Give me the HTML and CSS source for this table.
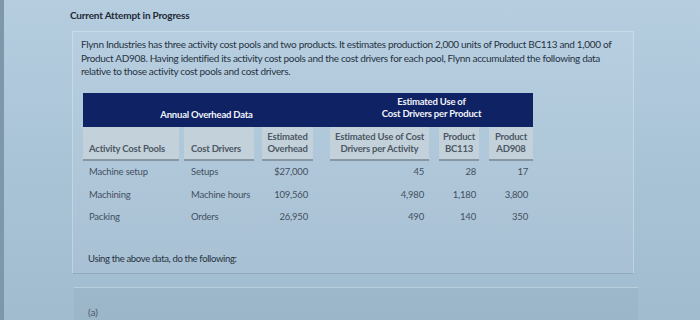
FILE: index.html
```html
<!DOCTYPE html>
<html>
<head>
<meta charset="utf-8">
<link rel="stylesheet" href="styles.css">
</head>
<body>
<div class="screen">
  <div class="title">Current Attempt in Progress</div>
  <div class="card">
    <p class="intro">Flynn Industries has three activity cost pools and two products. It estimates production 2,000 units of Product BC113 and 1,000 of Product AD908. Having identified its activity cost pools and the cost drivers for each pool, Flynn accumulated the following data relative to those activity cost pools and cost drivers.</p>
    <div class="table">
      <div class="band band-left">Annual Overhead Data</div>
      <div class="band band-right">Estimated Use of<br>Cost Drivers per Product</div>

      <div class="sh c1 left">Activity Cost Pools</div>
      <div class="sh c2 left">Cost Drivers</div>
      <div class="sh c3">Estimated<br>Overhead</div>
      <div class="sh c4">Estimated Use of Cost<br>Drivers per Activity</div>
      <div class="sh c5">Product<br>BC113</div>
      <div class="sh c6">Product<br>AD908</div>

      <div class="td c1 left">Machine setup</div>
      <div class="td c2 left">Setups</div>
      <div class="td c3 num">$27,000</div>
      <div class="td c4 num">45</div>
      <div class="td c5 num">28</div>
      <div class="td c6 num">17</div>

      <div class="td c1 left">Machining</div>
      <div class="td c2 left">Machine hours</div>
      <div class="td c3 num">109,560</div>
      <div class="td c4 num">4,980</div>
      <div class="td c5 num">1,180</div>
      <div class="td c6 num">3,800</div>

      <div class="td c1 left">Packing</div>
      <div class="td c2 left">Orders</div>
      <div class="td c3 num">26,950</div>
      <div class="td c4 num">490</div>
      <div class="td c5 num">140</div>
      <div class="td c6 num">350</div>
    </div>
    <p class="instr">Using the above data, do the following:</p>
  </div>
  <div class="part"><span class="part-label">(a)</span></div>
</div>
</body>
</html>
```

FILE: styles.css
```css
html, body {
  margin: 0;
  padding: 0;
  height: 100%;
}
body {
  font-family: Lato, "Open Sans", "Liberation Sans", sans-serif;
  background: linear-gradient(180deg, #b5cddf 0%, #abc5d8 45%, #a1bbcf 100%);
  overflow: hidden;
}
.screen {
  height: 320px;
  border-left: 4px solid #7f97ab;
  box-sizing: border-box;
  padding-top: 8px;
}
.title {
  margin-left: 66px;
  font-size: 10px;
  font-weight: 700;
  line-height: 14px;
  color: #1f2a37;
  letter-spacing: -0.2px;
}
.card {
  margin: 9px 0 0 68px;
  width: 562px;
  box-sizing: border-box;
  padding: 6px 8px 8px 8px;
  background: rgba(255, 255, 255, 0.06);
  border: 1px solid rgba(235, 243, 250, 0.35);
  border-bottom: 1px solid #93a9bb;
}
.intro {
  margin: 0;
  font-size: 10px;
  line-height: 13.5px;
  color: #263342;
  letter-spacing: -0.32px;
  width: 545px;
}
.table {
  margin: 14px 0 0 2px;
  display: grid;
  grid-template-columns: 101px 78px 68px 109px 50px 44px;
  grid-template-rows: 34px 34px;
  grid-auto-rows: 22.5px;
  font-size: 9.5px;
  color: #4a5764;
}
.band {
  background: #0f2264;
  color: #f1f4fa;
  font-weight: 700;
  font-size: 9.5px;
  line-height: 12.5px;
  text-align: center;
  height: 34px;
  display: flex;
  align-items: flex-end;
  justify-content: center;
  box-sizing: border-box;
  letter-spacing: -0.2px;
}
.band-left {
  grid-column: 1 / 4;
  padding-bottom: 5px;
}
.band-right {
  grid-column: 4 / 7;
  padding-bottom: 6px;
}
.sh {
  height: 34px;
  box-sizing: border-box;
  background: #c3d1db;
  border-bottom: 2px solid #8797a4;
  display: flex;
  flex-direction: column;
  justify-content: flex-end;
  align-items: center;
  text-align: center;
  padding-bottom: 4px;
  font-size: 9.5px;
  line-height: 12px;
  font-weight: 700;
  color: #4c5864;
  letter-spacing: -0.2px;
}
.sh.left {
  align-items: flex-start;
  padding-left: 6px;
}
.sh.c1 { margin-right: 5px; }
.sh.c2 { margin-right: 8px; padding-left: 7px; }
.sh.c3 { margin-right: 17px; }
.sh.c4 { margin-right: 10px; }
.sh.c5 { margin-right: 10px; }
.td {
  display: flex;
  align-items: center;
  font-size: 9.5px;
  letter-spacing: -0.2px;
  color: #435060;
}
.td.left { padding-left: 6px; }
.td.c2 { padding-left: 7px; }
.td.num { justify-content: flex-end; }
.td.c3 { padding-right: 22px; }
.td.c4 { padding-right: 15px; }
.td.c5 { padding-right: 13px; }
.td.c6 { padding-right: 5px; }
.instr {
  margin: 24px 0 0 7px;
  font-size: 9.5px;
  line-height: 13px;
  color: #263342;
  letter-spacing: -0.35px;
}
.part {
  margin: 13px 0 0 70px;
  width: 564px;
  height: 40px;
  background: rgba(120, 145, 165, 0.12);
  border-top: 1px solid rgba(235, 243, 250, 0.35);
  padding: 12px 0 0 14px;
  box-sizing: border-box;
}
.part-label {
  font-size: 10px;
  color: #4b5866;
}
```
